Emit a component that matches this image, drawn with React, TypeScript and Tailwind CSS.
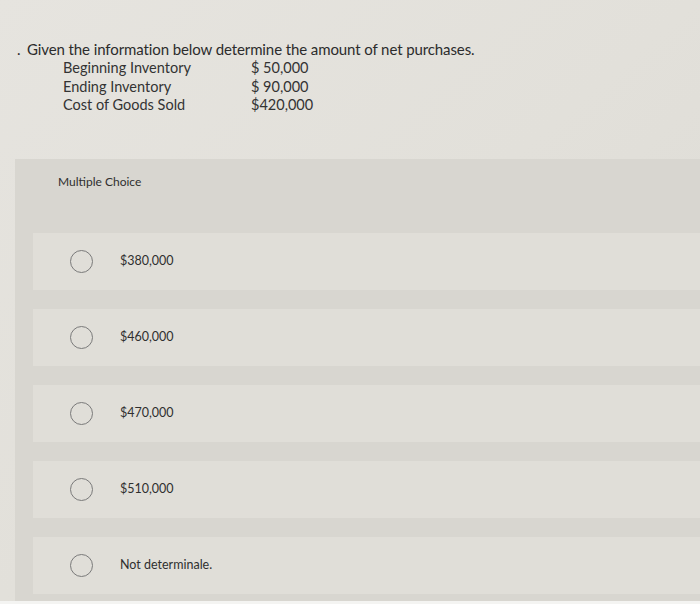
import React from "react";

const options = ["$380,000", "$460,000", "$470,000", "$510,000", "Not determinale."];

export default function App() {
  return (
    <div
      className="w-[700px] h-[604px] overflow-hidden bg-gradient-to-br from-[#e6e4df] via-[#e2e0da] to-[#dcdad4] flex flex-col"
      style={{ fontFamily: "Lato, 'Open Sans', sans-serif" }}
    >
      <div className="pt-[42px] pl-[17px] text-[#2c2c2c]">
        <div className="flex items-baseline text-[15px] leading-[15px]">
          <span className="w-[10px]">.</span>
          <span className="tracking-[-0.1px]">Given the information below determine the amount of net purchases.</span>
        </div>
        <div className="mt-[2px] pl-[46px] text-[14.5px] leading-[18.5px] text-[#333] grid grid-cols-[134px_auto] w-fit">
          <span>Beginning Inventory</span>
          <span className="pl-[54px]">$ 50,000</span>
          <span>Ending Inventory</span>
          <span className="pl-[54px]">$ 90,000</span>
          <span>Cost of Goods Sold</span>
          <span className="pl-[54px]">$420,000</span>
        </div>
      </div>
      <div className="mt-[44px] ml-[15px] flex-1 bg-[#d8d6d0] pt-[13px] pb-[4px]">
        <div className="pl-[43px] text-[12px] text-[#2f2f2f] h-[20px] leading-[20px]">Multiple Choice</div>
        <div className="mt-[41px] flex flex-col gap-[19px] pl-[18px]">
          {options.map((o) => (
            <div key={o} className="h-[57px] bg-[#e0ded8] flex items-center pl-[37px]">
              <div className="w-[23px] h-[23px] rounded-full border-[1.5px] border-[#7a7a7a]" />
              <span className="ml-[27px] text-[12.5px] text-[#2f2f2f]">{o}</span>
            </div>
          ))}
        </div>
      </div>
      <div className="h-[3px] bg-[#f4f4f2]" />
    </div>
  );
}
